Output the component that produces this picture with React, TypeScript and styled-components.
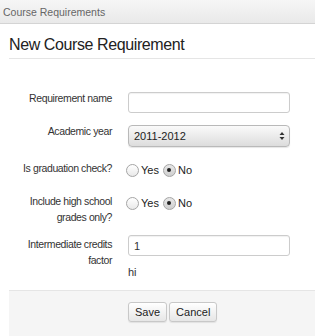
import React from "react";
import styled, { createGlobalStyle } from "styled-components";

const Global = createGlobalStyle`
  html, body { margin: 0; padding: 0; background: #fff; }
  body { font-family: "Liberation Sans", Arial, sans-serif; color: #333; }
  * { box-sizing: border-box; }
`;

const Page = styled.div`
  width: 315px;
  height: 336px;
  display: flex;
  flex-direction: column;
  overflow: hidden;
`;

const TopBar = styled.div`
  height: 24px;
  padding: 0 0 0 3px;
  display: flex;
  align-items: center;
  font-size: 10.5px;
  color: #666;
  background: linear-gradient(#f6f6f6, #e9e9e9);
  border-bottom: 1px solid #d4d4d4;
`;

const Body = styled.div`
  padding: 0 0 0 9px;
  display: flex;
  flex-direction: column;
  flex: 1;
`;

const Title = styled.h1`
  margin: 0;
  padding: 12px 0 0 0;
  height: 35px;
  font-size: 16px;
  letter-spacing: -0.4px;
  font-weight: normal;
  color: #222;
  border-bottom: 1px solid #e5e5e5;
`;

const Form = styled.div`
  display: flex;
  flex-direction: column;
  padding-top: 33px;
`;

const Row = styled.div<{ $mb: number }>`
  display: grid;
  grid-template-columns: 103px 178px;
  column-gap: 16px;
  margin-bottom: ${(p) => p.$mb}px;
`;

const Label = styled.label<{ $mt?: number }>`
  text-align: right;
  font-size: 10.5px;
  letter-spacing: -0.4px;
  line-height: 16px;
  margin-top: ${(p) => p.$mt ?? -2}px;
  color: #333;
`;

const Controls = styled.div`
  display: flex;
  flex-direction: column;
`;

const TextInput = styled.div`
  width: 162px;
  height: 21px;
  border: 1px solid #ccc;
  border-radius: 3px;
  background: #fff;
  box-shadow: inset 0 1px 1px rgba(0, 0, 0, 0.06);
  font-size: 11px;
  padding: 4px 5px 0;
  color: #333;
`;

const Select = styled.div`
  width: 162px;
  height: 22px;
  border: 1px solid #b9b9b9;
  border-radius: 4px;
  background: linear-gradient(#fafafa, #dcdcdc);
  box-shadow: 0 1px 1px rgba(0, 0, 0, 0.1);
  display: flex;
  align-items: center;
  justify-content: space-between;
  padding: 0 4px 0 5px;
  font-size: 11px;
  color: #222;
`;

const Radios = styled.div`
  display: flex;
  align-items: center;
  gap: 4px;
  height: 16px;
  margin-left: -2px;
  font-size: 11px;
  color: #222;
`;

const RadioItem = styled.span`
  display: flex;
  align-items: center;
  gap: 2px;
`;

const RadioDot = styled.span<{ $on?: boolean }>`
  width: 13px;
  height: 13px;
  border-radius: 50%;
  border: 1px solid #a5a5a5;
  background: ${(p) => (p.$on ? "linear-gradient(#e8e8e8, #cfcfcf)" : "linear-gradient(#ffffff, #e9e9e9)")};
  display: flex;
  align-items: center;
  justify-content: center;
  &::after {
    content: "";
    width: 4px;
    height: 4px;
    border-radius: 50%;
    background: ${(p) => (p.$on ? "#222" : "transparent")};
  }
`;

const Help = styled.div`
  font-size: 11px;
  color: #333;
  margin-top: 10px;
`;

const Footer = styled.div`
  margin-top: 12px;
  flex: 1;
  background: #f5f5f5;
  border-top: 1px solid #e5e5e5;
  padding: 11px 0 0 119px;
  display: flex;
  gap: 2px;
  align-items: flex-start;
`;

const Button = styled.button`
  height: 20px;
  padding: 0 6px;
  font-family: "Liberation Sans", Arial, sans-serif;
  font-size: 11px;
  color: #222;
  border: 1px solid #c8c8c8;
  border-radius: 3px;
  background: linear-gradient(#ffffff, #e6e6e6);
  box-shadow: 0 1px 1px rgba(0, 0, 0, 0.08);
`;

const Arrows = () => (
  <svg width="6" height="10" viewBox="0 0 6 10">
    <path d="M3 1 L5.5 4 H0.5 Z M3 9 L5.5 6 H0.5 Z" fill="#333" />
  </svg>
);

const YesNo = () => (
  <Radios>
    <RadioItem>
      <RadioDot />
      Yes
    </RadioItem>
    <RadioItem>
      <RadioDot $on />
      No
    </RadioItem>
  </Radios>
);

export default function App() {
  return (
    <Page>
      <Global />
      <TopBar>Course Requirements</TopBar>
      <Body>
        <Title>New Course Requirement</Title>
        <Form>
          <Row $mb={12}>
            <Label>Requirement name</Label>
            <Controls>
              <TextInput />
            </Controls>
          </Row>
          <Row $mb={15}>
            <Label>Academic year</Label>
            <Controls>
              <Select>
                <span>2011-2012</span>
                <Arrows />
              </Select>
            </Controls>
          </Row>
          <Row $mb={17}>
            <Label>Is graduation check?</Label>
            <Controls>
              <YesNo />
            </Controls>
          </Row>
          <Row $mb={10}>
            <Label>Include high school grades only?</Label>
            <Controls>
              <YesNo />
            </Controls>
          </Row>
          <Row $mb={0}>
            <Label $mt={1}>Intermediate credits factor</Label>
            <Controls>
              <TextInput>1</TextInput>
              <Help>hi</Help>
            </Controls>
          </Row>
        </Form>
        <Footer>
          <Button>Save</Button>
          <Button>Cancel</Button>
        </Footer>
      </Body>
    </Page>
  );
}
